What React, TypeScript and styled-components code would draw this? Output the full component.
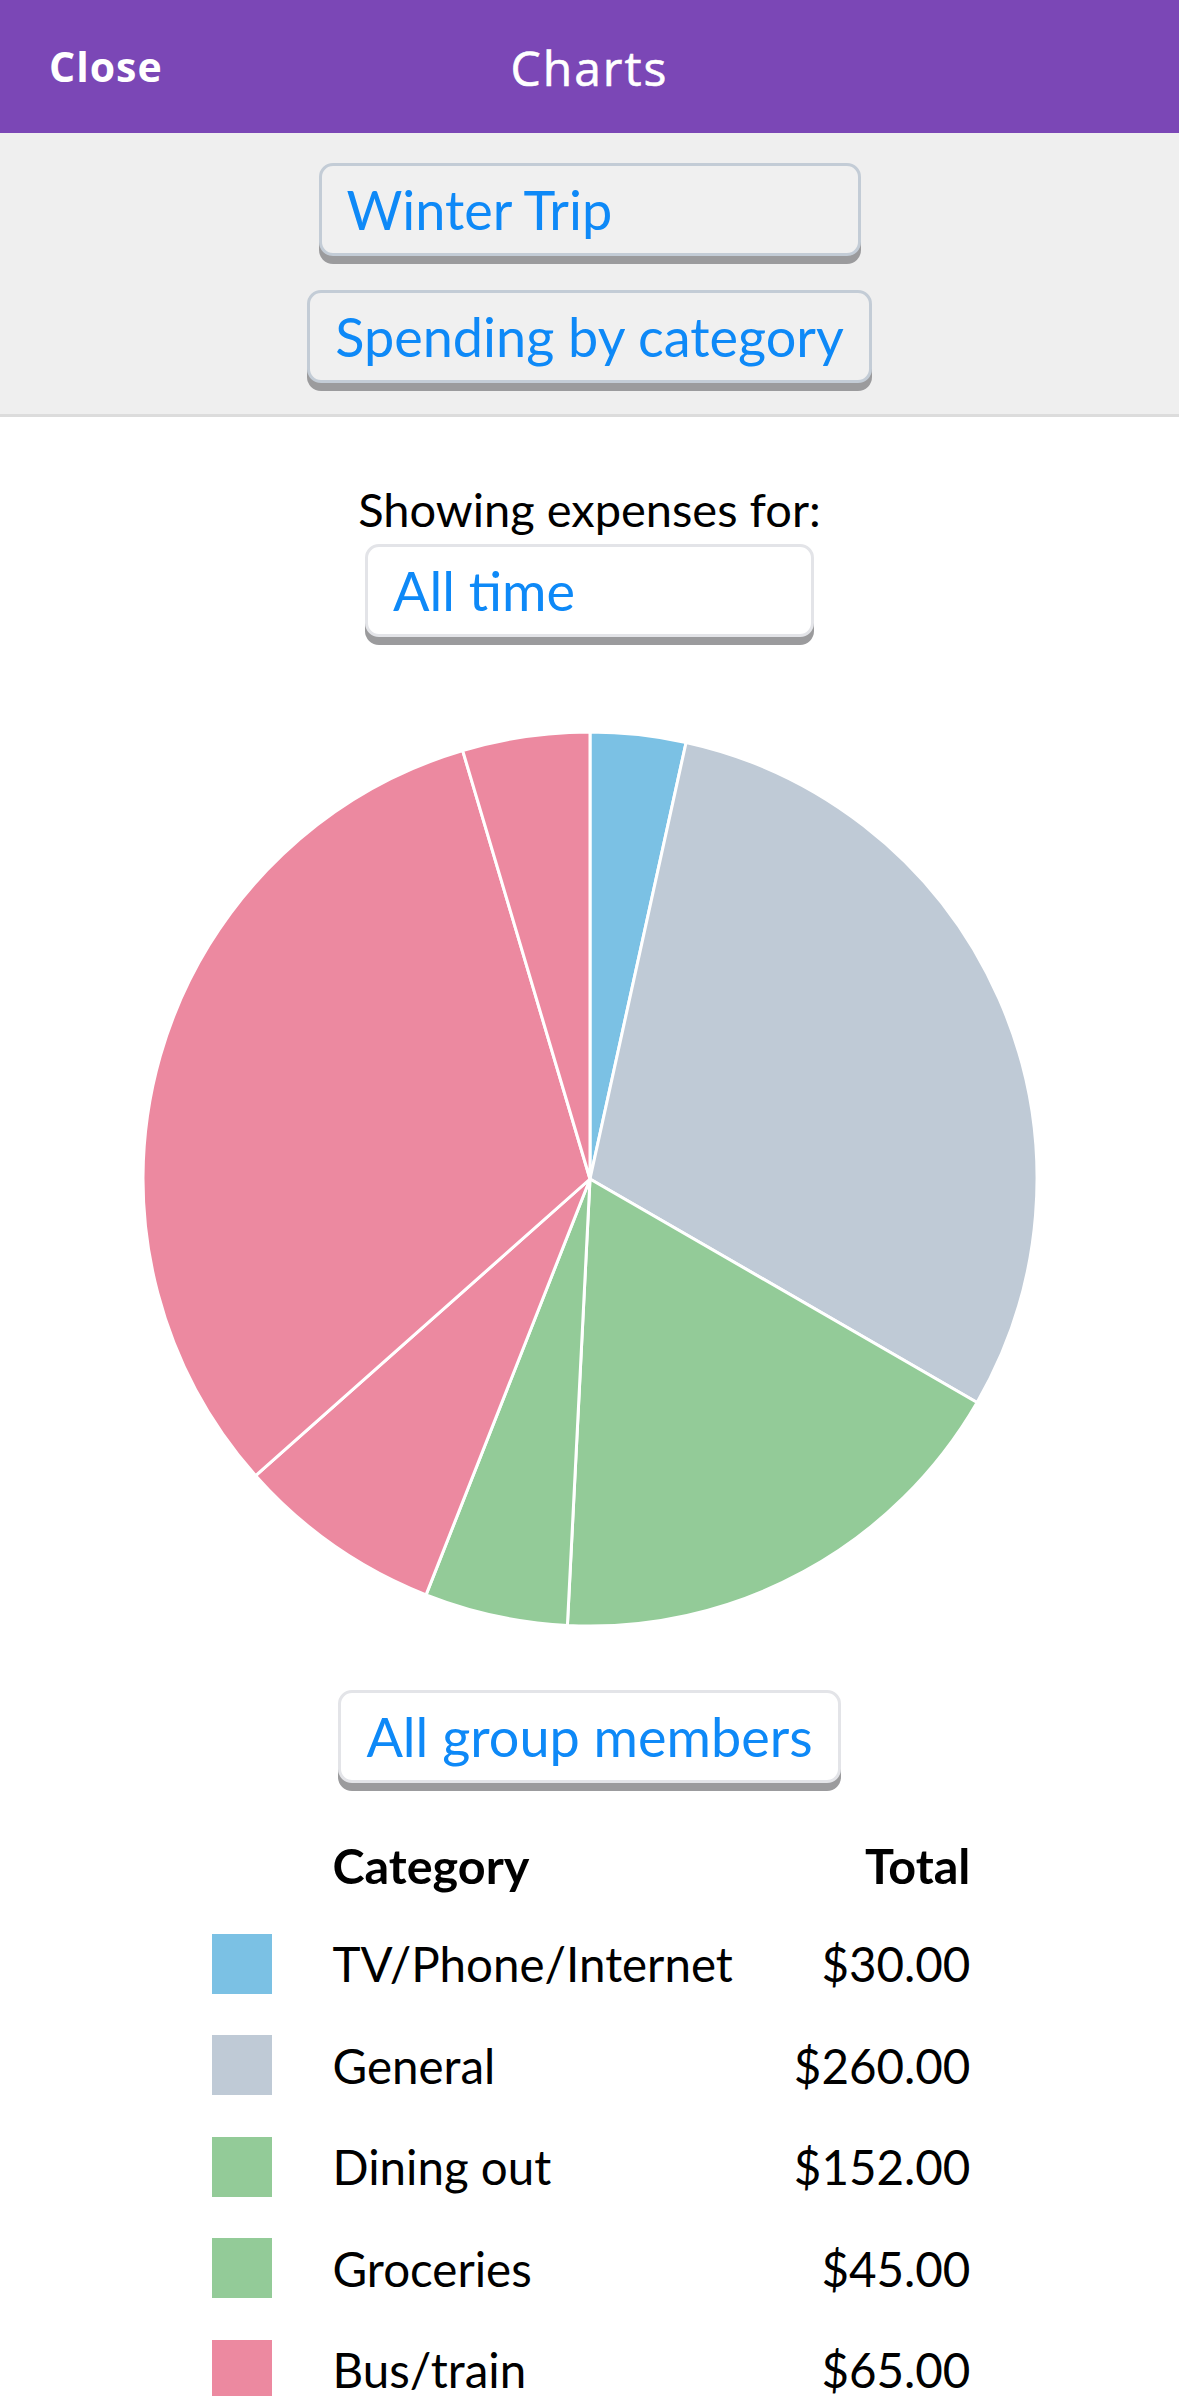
import React from "react";
import styled, { createGlobalStyle } from "styled-components";

// spending data: the last two rows sit below the fold in the screenshot
const slices = [
  { name: "TV/Phone/Internet", amount: 30, color: "#7bc1e4" },
  { name: "General", amount: 260, color: "#bfcad6" },
  { name: "Dining out", amount: 152, color: "#93cb98" },
  { name: "Groceries", amount: 45, color: "#93cb98" },
  { name: "Bus/train", amount: 65, color: "#ec89a0" },
  { name: "Flights", amount: 278, color: "#ec89a0" },
  { name: "Taxi", amount: 40, color: "#ec89a0" },
];

const GlobalStyle = createGlobalStyle`
  body {
    margin: 0;
    background: #ffffff;
    font-family: Lato, "Open Sans", sans-serif;
  }
`;

function PieChart({ size }: { size: number }) {
  const r = size / 2 - 2;
  const c = size / 2;
  const total = slices.reduce((s, x) => s + x.amount, 0);
  let angle = 0;
  const point = (a: number) => {
    const rad = (a / total) * Math.PI * 2;
    return [c + r * Math.sin(rad), c - r * Math.cos(rad)];
  };
  return (
    <svg width={size} height={size} viewBox={`0 0 ${size} ${size}`}>
      {slices.map((s) => {
        const [x1, y1] = point(angle);
        angle += s.amount;
        const [x2, y2] = point(angle);
        const large = s.amount / total > 0.5 ? 1 : 0;
        return (
          <path
            key={s.name}
            d={`M${c} ${c} L${x1} ${y1} A${r} ${r} 0 ${large} 1 ${x2} ${y2} Z`}
            fill={s.color}
            stroke="#ffffff"
            strokeWidth={3}
            strokeLinejoin="round"
          />
        );
      })}
    </svg>
  );
}

export default function App() {
  return (
    <Screen>
      <GlobalStyle />
      <TopBar>
        <CloseLink>Close</CloseLink>
        <Title>Charts</Title>
        <span />
      </TopBar>
      <Picker>
        <PillButton $width={542} $tone="gray">Winter Trip</PillButton>
        <PillButton $tone="gray">Spending by category</PillButton>
      </Picker>
      <ChartArea>
        <Caption>Showing expenses for:</Caption>
        <PillButton $width={449}>All time</PillButton>
        <PieWrap>
          <PieChart size={898} />
        </PieWrap>
        <PillButton>All group members</PillButton>
        <Table>
          <span />
          <HeadCell>Category</HeadCell>
          <HeadCell $right>Total</HeadCell>
          {slices.map((s) => (
            <React.Fragment key={s.name}>
              <Swatch $color={s.color} />
              <Cell>{s.name}</Cell>
              <Cell $right>${s.amount.toFixed(2)}</Cell>
            </React.Fragment>
          ))}
        </Table>
      </ChartArea>
    </Screen>
  );
}

const Screen = styled.div`
  width: 100%;
  height: 100vh;
  overflow: hidden;
`;

const TopBar = styled.header`
  height: 133px;
  background: #7b47b6;
  display: grid;
  grid-template-columns: 1fr auto 1fr;
  align-items: center;
  padding: 0 49px;
  box-sizing: border-box;
  color: #ffffff;
  font-family: "Open Sans", sans-serif;
`;

const CloseLink = styled.span`
  font-size: 41px;
  font-weight: 700;
  letter-spacing: 1px;
  margin-top: -2px;
`;

const Title = styled.span`
  font-size: 48px;
  font-weight: 500;
  letter-spacing: 2px;
  margin-top: 2px;
  -webkit-text-stroke: 0.6px #ffffff;
`;

const Picker = styled.div`
  background: #efefef;
  border-bottom: 3px solid #dcdcdc;
  display: flex;
  flex-direction: column;
  align-items: center;
  gap: 34px;
  padding: 30px 0 31px;
`;

const PillButton = styled.div<{ $width?: number; $tone?: "gray" | "white" }>`
  box-sizing: border-box;
  height: 93px;
  ${(p) => (p.$width ? `width: ${p.$width}px;` : "")}
  display: flex;
  align-items: center;
  padding: 0 25px;
  background: ${(p) => (p.$tone === "gray" ? "#f0f0f0" : "#ffffff")};
  border: 3px solid ${(p) => (p.$tone === "gray" ? "#c3ccd6" : "#e3e4e8")};
  border-radius: 14px;
  box-shadow: 0 8px 0 #9b9b9d;
  color: #0e89f7;
  font-size: 54px;
  white-space: nowrap;
`;

const ChartArea = styled.main`
  display: flex;
  flex-direction: column;
  align-items: center;
  padding-top: 64px;
`;

const Caption = styled.div`
  font-size: 47px;
  color: #000000;
  margin-bottom: 7px;
`;

const PieWrap = styled.div`
  margin: 93px 0 62px;
  display: flex;
`;

const Table = styled.div`
  width: 756px;
  margin-top: 34px;
  display: grid;
  grid-template-columns: 60px 1fr auto;
  column-gap: 61px;
  grid-template-rows: 96px;
  grid-auto-rows: 101.5px;
  align-items: center;
  font-size: 47.5px;
  color: #000000;
`;

const HeadCell = styled.div<{ $right?: boolean }>`
  font-weight: 700;
  font-size: 48.5px;
  text-align: ${(p) => (p.$right ? "right" : "left")};
`;

const Cell = styled.div<{ $right?: boolean }>`
  text-align: ${(p) => (p.$right ? "right" : "left")};
`;

const Swatch = styled.div<{ $color: string }>`
  width: 60px;
  height: 60px;
  background: ${(p) => p.$color};
`;
